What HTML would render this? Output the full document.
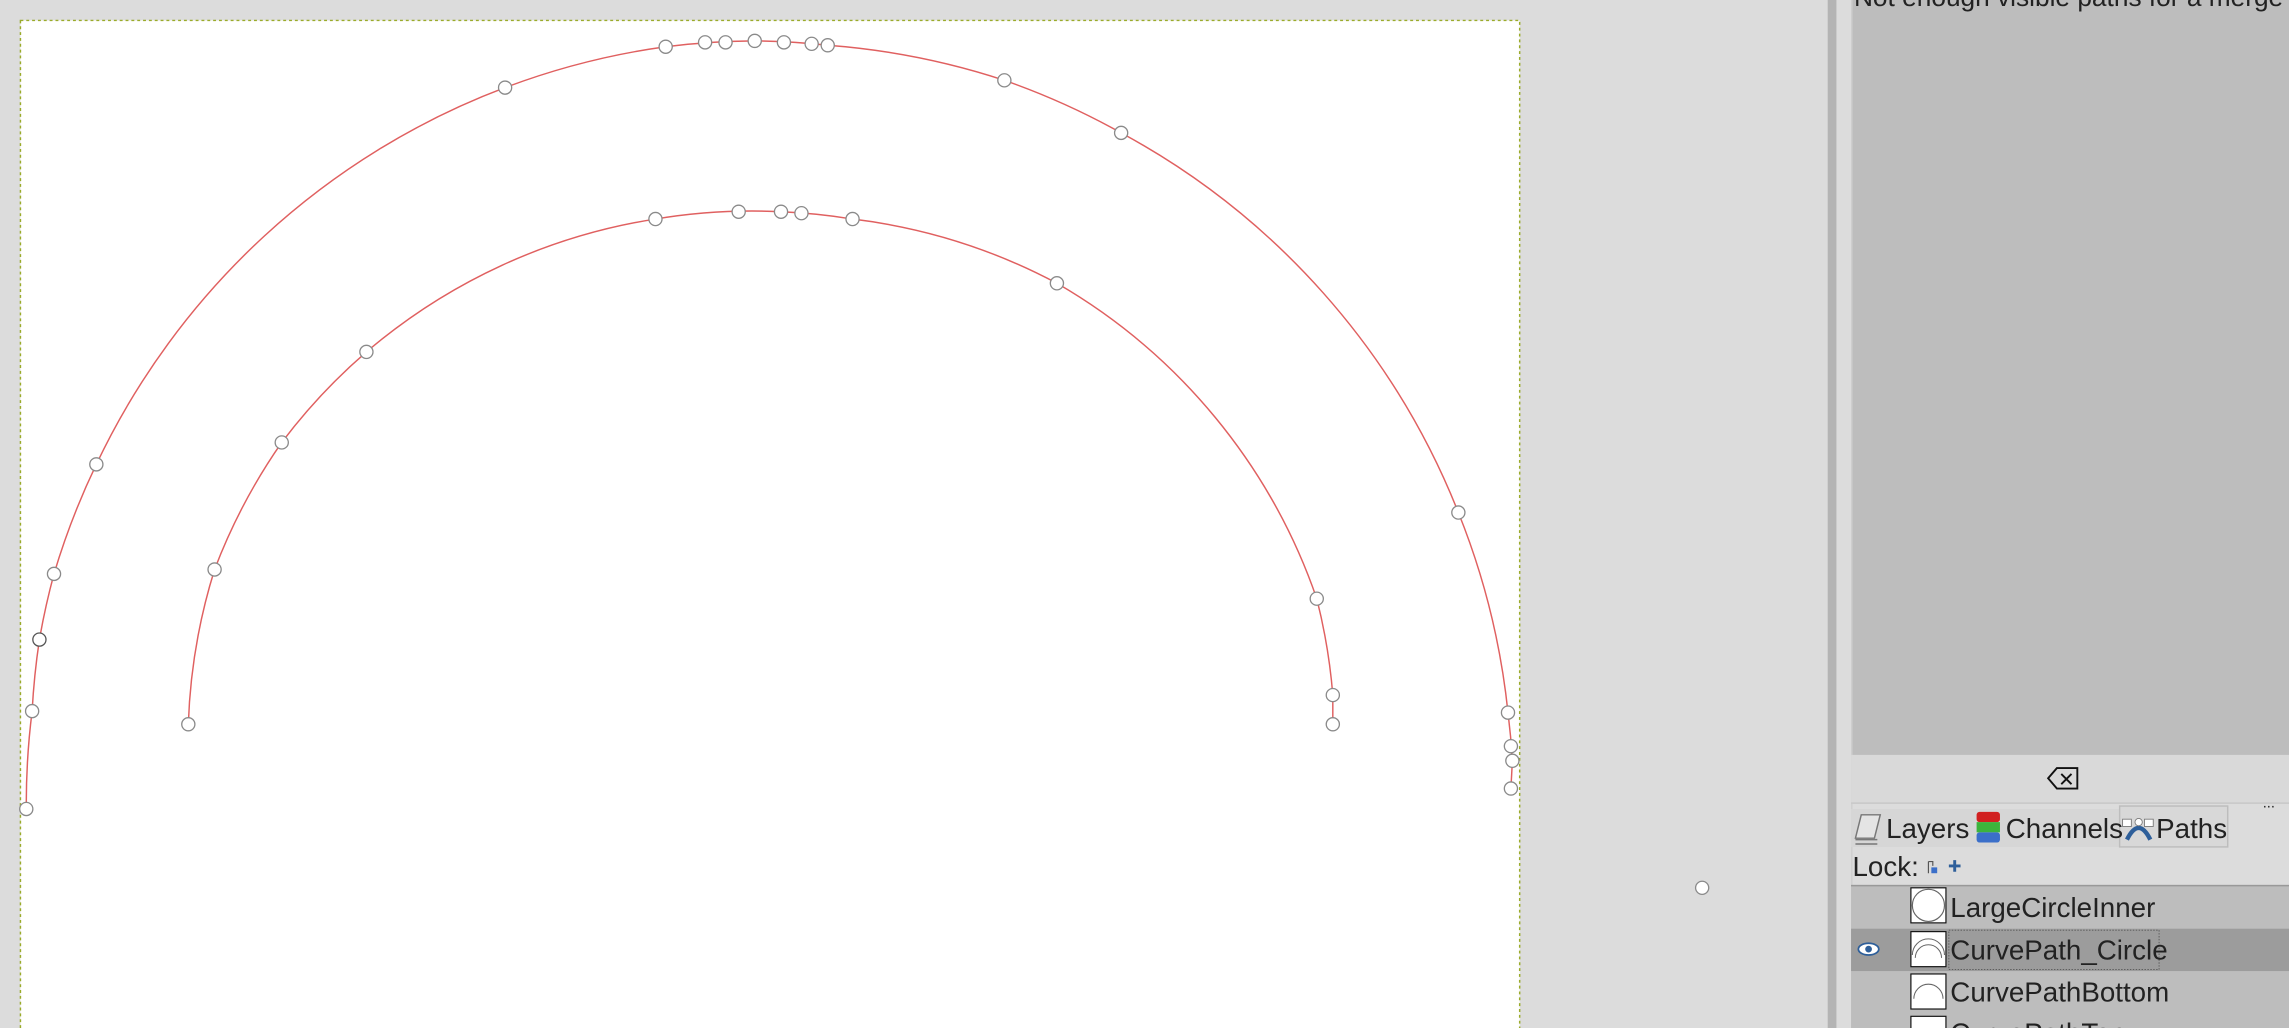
<!DOCTYPE html>
<html><head><meta charset="utf-8"><style>
html,body{margin:0;padding:0;background:#dcdcdc;overflow:hidden}
svg{display:block}
text{font-family:"Liberation Sans",sans-serif;fill:#222}
</style></head><body>
<svg width="2289" height="1028" viewBox="0 0 1568 704" preserveAspectRatio="none" xmlns="http://www.w3.org/2000/svg">
<rect width="1568" height="704" fill="#dcdcdc"/>
<rect x="14" y="14" width="1027" height="700" fill="#fff" stroke="#9aab2a" stroke-width="1" stroke-dasharray="2,2"/>
<g fill="none" stroke="#e06060" stroke-width="1">
<path d="M18,554 A508,508 0 0 1 22,487 A508,508 0 0 1 27,438 A508,508 0 0 1 37,393 A508,508 0 0 1 66,318 A508,508 0 0 1 346,60 A508,508 0 0 1 456,32 A508,508 0 0 1 517,28 A508,508 0 0 1 567,31 A508,508 0 0 1 688,55 A508,508 0 0 1 768,91 A508,508 0 0 1 999,351 A508,508 0 0 1 1033,488 A508,508 0 0 1 1036,521 L1035,540"/>
<path d="M129,496 A400,400 0 0 1 147,390 A400,400 0 0 1 193,303 A400,400 0 0 1 251,241 A400,400 0 0 1 449,150 A400,400 0 0 1 535,145 A400,400 0 0 1 584,150 A400,400 0 0 1 724,194 A400,400 0 0 1 902,410 A400,400 0 0 1 913,476 L913,496"/>
</g>
<g fill="#fff" stroke="#8a8a8a" stroke-width="0.9">
<circle cx="18" cy="554" r="4.5"/><circle cx="22" cy="487" r="4.5"/><circle cx="27" cy="438" r="4.5" stroke="#555"/><circle cx="37" cy="393" r="4.5"/><circle cx="66" cy="318" r="4.5"/><circle cx="346" cy="60" r="4.5"/><circle cx="456" cy="32" r="4.5"/><circle cx="483" cy="29" r="4.5"/><circle cx="497" cy="29" r="4.5"/><circle cx="517" cy="28" r="4.5"/><circle cx="537" cy="29" r="4.5"/><circle cx="556" cy="30" r="4.5"/><circle cx="567" cy="31" r="4.5"/><circle cx="688" cy="55" r="4.5"/><circle cx="768" cy="91" r="4.5"/><circle cx="999" cy="351" r="4.5"/><circle cx="1033" cy="488" r="4.5"/><circle cx="1035" cy="511" r="4.5"/><circle cx="1036" cy="521" r="4.5"/><circle cx="1035" cy="540" r="4.5"/><circle cx="1166" cy="608" r="4.5"/>
<circle cx="129" cy="496" r="4.5"/><circle cx="147" cy="390" r="4.5"/><circle cx="193" cy="303" r="4.5"/><circle cx="251" cy="241" r="4.5"/><circle cx="449" cy="150" r="4.5"/><circle cx="506" cy="145" r="4.5"/><circle cx="535" cy="145" r="4.5"/><circle cx="549" cy="146" r="4.5"/><circle cx="584" cy="150" r="4.5"/><circle cx="724" cy="194" r="4.5"/><circle cx="902" cy="410" r="4.5"/><circle cx="913" cy="476" r="4.5"/><circle cx="913" cy="496" r="4.5"/>
</g>
<rect x="1252" y="0" width="6" height="704" fill="#b4b4b4"/>
<rect x="1258" y="0" width="10" height="704" fill="#dcdcdc"/>
<rect x="1268" y="0" width="300" height="517" fill="#bdbdbd"/>
<line x1="1268.5" y1="0" x2="1268.5" y2="704" stroke="#cfcfcf"/>
<text x="1270" y="4" font-size="18" fill="#333">Not enough visible paths for a merge</text>
<rect x="1268" y="517" width="300" height="33" fill="#d9d9d9"/>
<line x1="1268" y1="550" x2="1568" y2="550" stroke="#c8c8c8"/>
<path d="M1403,533 L1409,526 H1423 V540 H1409 Z" fill="none" stroke="#111" stroke-width="1.3"/>
<path d="M1412,530 L1419,537 M1419,530 L1412,537" stroke="#111" stroke-width="1.3"/>
<text x="1550" y="553" font-size="10">...</text>
<rect x="1268" y="554" width="84" height="26" fill="#d6d6d6"/>
<rect x="1352" y="554" width="100" height="26" fill="#d6d6d6"/>
<rect x="1452" y="552" width="74" height="28" fill="#d8d8d8" stroke="#bdbdbd"/>
<path d="M1271,574 L1275,558 H1288 L1284,574 Z" fill="#e4e4e4" stroke="#777"/>
<path d="M1271,578 H1286 M1271,575 H1286" stroke="#777"/>
<text x="1292" y="574" font-size="19">Layers</text>
<rect x="1354" y="556" width="16" height="7" rx="2" fill="#d12020"/>
<rect x="1354" y="563" width="16" height="7" fill="#3cb43c"/>
<rect x="1354" y="570" width="16" height="7" rx="2" fill="#3b6fc9"/>
<text x="1374" y="574" font-size="19">Channels</text>
<path d="M1457,575 Q1465,559 1473,575" fill="none" stroke="#2e5f9a" stroke-width="3"/>
<rect x="1454" y="561" width="6" height="5" fill="#fff" stroke="#777" stroke-width="0.6"/>
<rect x="1469" y="561" width="6" height="5" fill="#fff" stroke="#777" stroke-width="0.6"/>
<circle cx="1465" cy="563" r="2.5" fill="#fff" stroke="#777" stroke-width="0.6"/>
<text x="1477" y="574" font-size="19">Paths</text>
<text x="1269" y="600" font-size="19">Lock:</text>
<path d="M1321,590 v8 M1321,590 h3 v3" stroke="#555" stroke-width="0.8" fill="none"/>
<rect x="1323" y="594" width="4" height="4" fill="#3b6fc9"/>
<path d="M1339,589 v8 M1335,593 h8" stroke="#2e5f9a" stroke-width="2"/>
<rect x="1268" y="606" width="300" height="98" fill="#bdbdbd"/>
<line x1="1268" y1="606.5" x2="1568" y2="606.5" stroke="#999"/>
<rect x="1268" y="636" width="300" height="29" fill="#9c9c9c"/>
<rect x="1335" y="637" width="144" height="27" fill="none" stroke="#555" stroke-dasharray="1,1" stroke-width="0.6"/>
<g fill="#fff" stroke="#111" stroke-width="0.8">
<rect x="1309" y="608" width="24" height="24"/><rect x="1309" y="638" width="24" height="24"/><rect x="1309" y="667" width="24" height="24"/><rect x="1309" y="696" width="24" height="24"/>
</g>
<circle cx="1321" cy="620" r="11" fill="none" stroke="#666" stroke-width="0.8"/>
<path d="M1310,654 A11,11 0 0 1 1332,654 M1312,656 A9,9 0 0 1 1330,656" fill="none" stroke="#666" stroke-width="0.7"/>
<path d="M1311,684 A10,10 0 0 1 1331,684" fill="none" stroke="#666" stroke-width="0.7"/>
<ellipse cx="1280" cy="650" rx="7" ry="4" fill="#fff" stroke="#2e5f9a" stroke-width="1.2"/>
<circle cx="1280" cy="650" r="2.3" fill="#2e5f9a"/>
<text x="1336" y="628" font-size="19">LargeCircleInner</text>
<text x="1336" y="657" font-size="19">CurvePath_Circle</text>
<text x="1336" y="686" font-size="19">CurvePathBottom</text>
<text x="1336" y="714" font-size="19">CurvePathTop</text>
</svg>
</body></html>
